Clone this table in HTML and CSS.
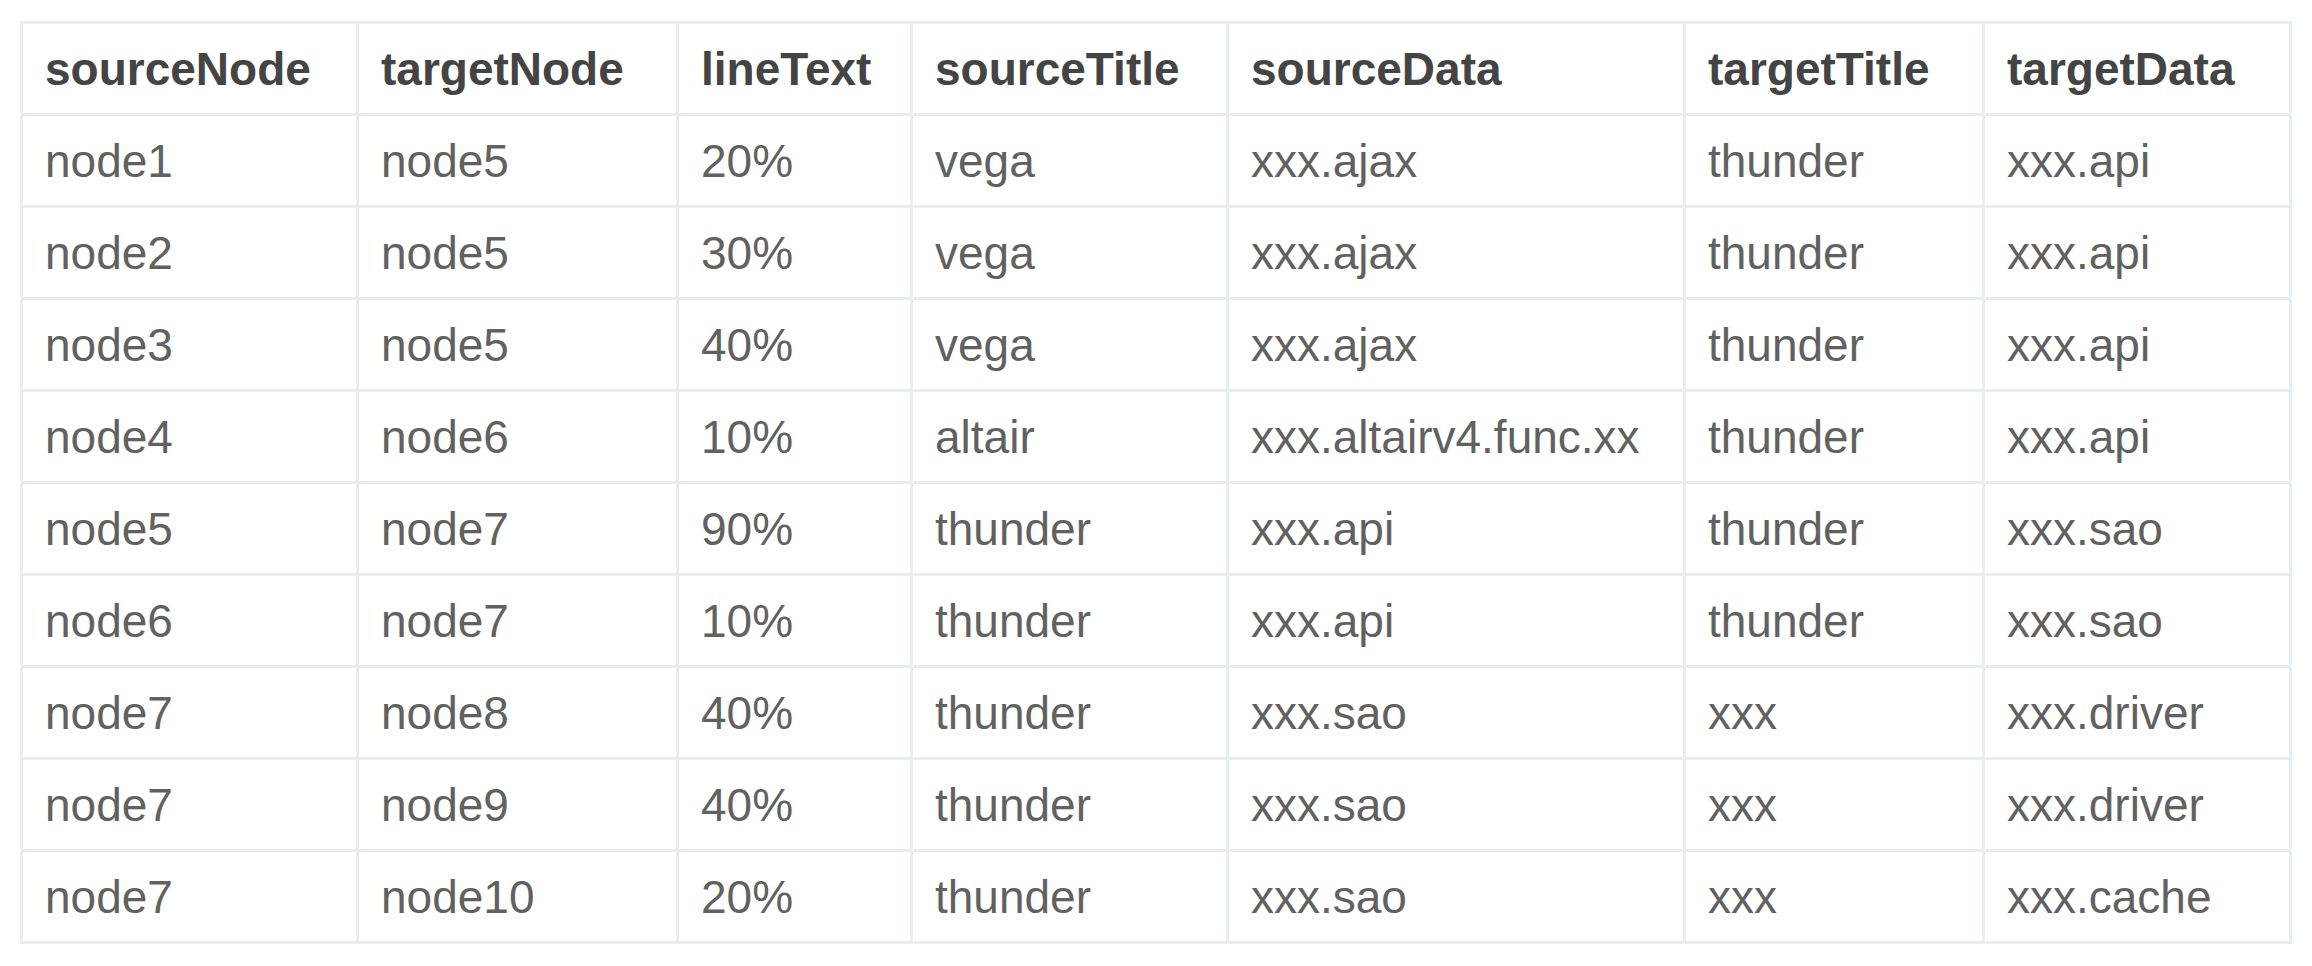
FILE: index.html
```html
<!DOCTYPE html>
<html lang="en">
<head>
<meta charset="utf-8">
<title>Table</title>
<link rel="stylesheet" href="styles.css">
</head>
<body>
<div class="wrap">
<table class="data">
<colgroup>
<col class="c1"><col class="c2"><col class="c3"><col class="c4"><col class="c5"><col class="c6"><col class="c7">
</colgroup>
<thead>
<tr><th>sourceNode</th><th>targetNode</th><th>lineText</th><th>sourceTitle</th><th>sourceData</th><th>targetTitle</th><th>targetData</th></tr>
</thead>
<tbody>
<tr><td>node1</td><td>node5</td><td>20%</td><td>vega</td><td>xxx.ajax</td><td>thunder</td><td>xxx.api</td></tr>
<tr><td>node2</td><td>node5</td><td>30%</td><td>vega</td><td>xxx.ajax</td><td>thunder</td><td>xxx.api</td></tr>
<tr><td>node3</td><td>node5</td><td>40%</td><td>vega</td><td>xxx.ajax</td><td>thunder</td><td>xxx.api</td></tr>
<tr><td>node4</td><td>node6</td><td>10%</td><td>altair</td><td>xxx.altairv4.func.xx</td><td>thunder</td><td>xxx.api</td></tr>
<tr><td>node5</td><td>node7</td><td>90%</td><td>thunder</td><td>xxx.api</td><td>thunder</td><td>xxx.sao</td></tr>
<tr><td>node6</td><td>node7</td><td>10%</td><td>thunder</td><td>xxx.api</td><td>thunder</td><td>xxx.sao</td></tr>
<tr><td>node7</td><td>node8</td><td>40%</td><td>thunder</td><td>xxx.sao</td><td>xxx</td><td>xxx.driver</td></tr>
<tr><td>node7</td><td>node9</td><td>40%</td><td>thunder</td><td>xxx.sao</td><td>xxx</td><td>xxx.driver</td></tr>
<tr><td>node7</td><td>node10</td><td>20%</td><td>thunder</td><td>xxx.sao</td><td>xxx</td><td>xxx.cache</td></tr>
</tbody>
</table>
</div>
</body>
</html>
```

FILE: styles.css
```css
html, body {
  margin: 0;
  padding: 0;
  background: #ffffff;
}

.wrap {
  padding: 21px 20px;
}

.data {
  width: 100%;
  table-layout: fixed;
  border-collapse: collapse;
  font-family: "Liberation Sans", Arial, sans-serif;
  font-size: 46px;
}

.c1 { width: 336px; }
.c2 { width: 320px; }
.c3 { width: 234px; }
.c4 { width: 316px; }
.c5 { width: 457px; }
.c6 { width: 299px; }
.c7 { width: 307px; }

.data th,
.data td {
  border: 3px solid #e8edef;
  height: 89px;
  padding: 0 0 0 22px;
  text-align: left;
  vertical-align: middle;
  white-space: nowrap;
  line-height: 1;
}

.data th {
  font-weight: bold;
  color: #444444;
}

.data td {
  font-weight: normal;
  color: #616161;
}
```
